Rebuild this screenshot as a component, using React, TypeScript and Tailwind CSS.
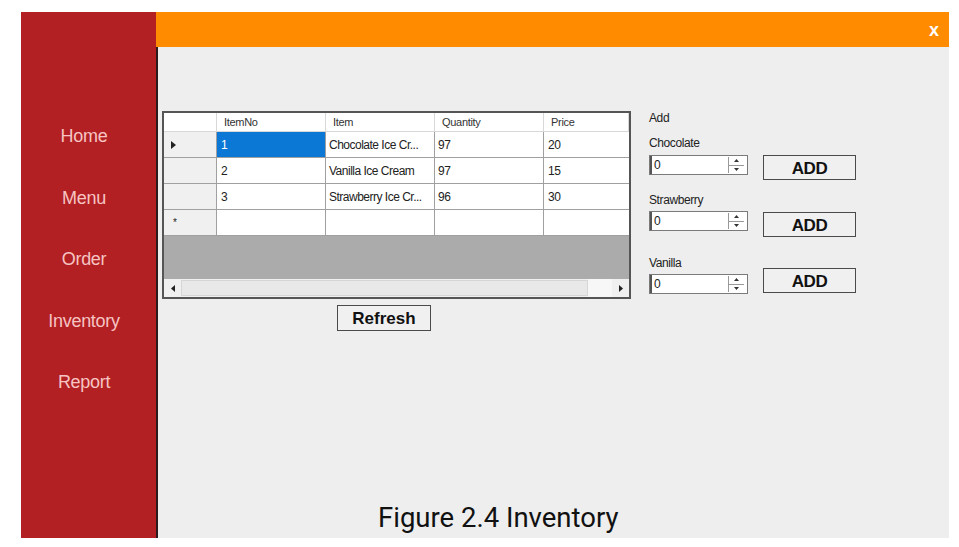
import React from "react";

const rows = [
  { no: "1", item: "Chocolate Ice Cr...", qty: "97", price: "20", sel: true },
  { no: "2", item: "Vanilla Ice Cream", qty: "97", price: "15" },
  { no: "3", item: "Strawberry Ice Cr...", qty: "96", price: "30" },
];

function Spinner() {
  return (
    <div className="flex h-[20px] w-[99px] items-center border border-[#7a7a7a] bg-white">
      <div className="h-full w-[2px] bg-[#555]" />
      <span className="flex-1 pl-[2px] text-[12px] text-[#222]">0</span>
      <div className="mr-[3px] flex h-[16px] w-[16px] flex-col border-l border-[#999]">
        <div className="flex flex-1 items-center justify-center border-b border-[#999]">
          <svg width="5" height="3" viewBox="0 0 5 3"><path d="M0 3 L2.5 0 L5 3Z" fill="#333" /></svg>
        </div>
        <div className="flex flex-1 items-center justify-center">
          <svg width="5" height="3" viewBox="0 0 5 3"><path d="M0 0 L2.5 3 L5 0Z" fill="#333" /></svg>
        </div>
      </div>
    </div>
  );
}

function AddBtn() {
  return (
    <div className="flex h-[25px] w-[93px] items-end justify-center border-[1.5px] border-[#4a4a4a] bg-[#f0f0f0] pb-[2px] text-[17px] font-bold leading-none text-[#111]">
      ADD
    </div>
  );
}

export default function App() {
  const cols = "grid grid-cols-[53px_109px_109px_109px_85px]";
  return (
    <div
      className="h-[547px] w-[959px] bg-white pl-[21px] pt-[12px]"
      style={{ fontFamily: '"Liberation Sans", Arial, sans-serif' }}
    >
      <div className="flex h-[526px] w-[928px]">
        {/* Sidebar */}
        <div className="flex w-[135px] flex-col bg-[#b22024] pr-[9px] pt-[94px] text-[18px] text-[#f6c4c2]">
          {["Home", "Menu", "Order", "Inventory", "Report"].map((t) => (
            <div key={t} className="flex h-[61.5px] items-center justify-center tracking-[-0.3px]">
              {t}
            </div>
          ))}
        </div>
        {/* Right column */}
        <div className="flex flex-1 flex-col">
          <div className="flex h-[35px] items-center justify-end bg-[#ff8c00] pr-[10px]">
            <span className="text-[18px] font-bold leading-none text-white">x</span>
          </div>
          <div className="flex flex-1 flex-col border-l-2 border-[#2b1b1b] bg-[#eeeeee]">
            <div className="flex">
              {/* grid column */}
              <div className="ml-[4px] mt-[64px] flex flex-col">
                <div className="w-[469px] border-2 border-[#555] bg-[#ababab] text-[11px] tracking-[-0.3px] text-[#222]">
                  {/* header */}
                  <div className={`${cols} h-[19px] bg-white text-[#333]`}>
                    <div className="border-r border-b border-[#d8d8d8] bg-white" />
                    {["ItemNo", "Item", "Quantity", "Price"].map((h) => (
                      <div key={h} className="flex items-center border-r border-b border-[#d8d8d8] pl-[7px]">
                        {h}
                      </div>
                    ))}
                  </div>
                  {rows.map((r) => (
                    <div key={r.no} className={`${cols} h-[26px] text-[12px]`}>
                      <div className="flex items-center border-r border-b border-[#a0a0a0] bg-[#f0f0f0] pl-[7px]">
                        {r.sel && (
                          <svg width="5" height="8" viewBox="0 0 5 8"><path d="M0 0 L5 4 L0 8Z" fill="#222" /></svg>
                        )}
                      </div>
                      <div
                        className={`flex items-center border-r border-b border-[#a0a0a0] pl-[4px] ${
                          r.sel ? "bg-[#0a78d4] text-white" : "bg-white"
                        }`}
                      >
                        {r.no}
                      </div>
                      <div className="flex items-center border-r border-b border-[#a0a0a0] bg-white pl-[3px] tracking-[-0.5px] whitespace-nowrap">
                        {r.item}
                      </div>
                      <div className="flex items-center border-r border-b border-[#a0a0a0] bg-white pl-[3px]">{r.qty}</div>
                      <div className="flex items-center border-b border-[#a0a0a0] bg-white pl-[4px]">{r.price}</div>
                    </div>
                  ))}
                  <div className={`${cols} h-[26px]`}>
                    <div className="flex items-center border-r border-b border-[#a0a0a0] bg-[#f0f0f0] pl-[9px] text-[10px] leading-none">
                      *
                    </div>
                    <div className="border-r border-b border-[#a0a0a0] bg-white" />
                    <div className="border-r border-b border-[#a0a0a0] bg-white" />
                    <div className="border-r border-b border-[#a0a0a0] bg-white" />
                    <div className="border-b border-[#a0a0a0] bg-white" />
                  </div>
                  <div className="h-[43px]" />
                  {/* scrollbar */}
                  <div className="flex h-[18px] bg-[#f0f0f0]">
                    <div className="flex w-[17px] items-center justify-center">
                      <svg width="4" height="7" viewBox="0 0 4 7"><path d="M4 0 L0 3.5 L4 7Z" fill="#222" /></svg>
                    </div>
                    <div className="my-[1px] w-[407px] border border-[#d6d6d6] bg-[#e8e8e8]" />
                    <div className="w-[24px] bg-[#f7f7f7]" />
                    <div className="flex flex-1 items-center justify-center">
                      <svg width="4" height="7" viewBox="0 0 4 7"><path d="M0 0 L4 3.5 L0 7Z" fill="#222" /></svg>
                    </div>
                  </div>
                </div>
                <div className="ml-[175px] mt-[6px] flex h-[26px] w-[94px] items-center justify-center border-[1.5px] border-[#4a4a4a] bg-[#f0f0f0] text-[17px] font-bold leading-none text-[#111]">
                  Refresh
                </div>
              </div>
              {/* right panel */}
              <div className="ml-[18px] mt-[64px] flex flex-col text-[12px] tracking-[-0.4px] text-[#222]">
                <div className="h-[14px] leading-[14px]">Add</div>
                <div className="mt-[11px] h-[14px] leading-[14px]">Chocolate</div>
                <div className="mt-[5px] flex items-start gap-[15px]">
                  <Spinner />
                  <AddBtn />
                </div>
                <div className="mt-[13px] h-[14px] leading-[14px]">Strawberry</div>
                <div className="mt-[4px] flex items-start gap-[15px]">
                  <Spinner />
                  <div className="mt-[1px]"><AddBtn /></div>
                </div>
                <div className="mt-[19px] h-[14px] leading-[14px]">Vanilla</div>
                <div className="-mt-[2px] flex items-start gap-[15px]">
                  <div className="mt-[6px]"><Spinner /></div>
                  <AddBtn />
                </div>
              </div>
            </div>
            <div className="flex-1" />
            <div
              className="mb-[5px] ml-[220px] text-[27.5px] leading-[30px] text-[#111]"
              style={{ fontFamily: "Roboto, sans-serif" }}
            >
              Figure 2.4 Inventory
            </div>
          </div>
        </div>
      </div>
    </div>
  );
}
